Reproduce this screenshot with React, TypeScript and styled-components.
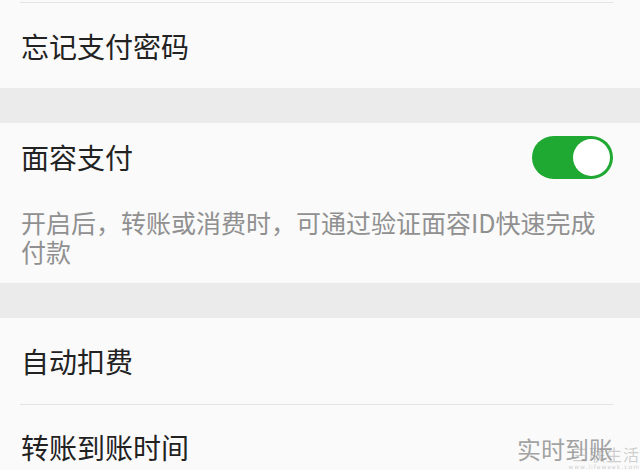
import React from "react";
import styled, { createGlobalStyle } from "styled-components";

const GlobalStyle = createGlobalStyle`
  html, body {
    margin: 0;
    padding: 0;
    background: #fafafa;
  }
  body {
    font-family: "Noto Sans CJK SC", "Noto Sans", sans-serif;
  }
`;

const Page = styled.div`
  position: relative;
  width: 640px;
  height: 470px;
  overflow: hidden;
  background: #fafafa;
  display: flex;
  flex-direction: column;
`;

const Divider = styled.div<{ $top?: number }>`
  height: 1px;
  margin: ${(p) => p.$top ?? 0}px 27px 0 20px;
  background: #e4e4e4;
  flex-shrink: 0;
`;

const Band = styled.div`
  height: 35px;
  background: #ebebeb;
  flex-shrink: 0;
`;

const Row = styled.div<{ $h: number }>`
  height: ${(p) => p.$h}px;
  flex-shrink: 0;
  display: flex;
  align-items: center;
  justify-content: space-between;
  padding: 0 27px 0 21px;
`;

const Title = styled.span`
  font-size: 28px;
  color: #222222;
`;

const Value = styled.span`
  font-size: 24px;
  color: #a3a3a3;
  margin-top: 2px;
`;

const Note = styled.p`
  margin: 0;
  padding: 17px 27px 17px 21px;
  font-size: 25px;
  line-height: 29px;
  color: #909090;
  flex-shrink: 0;
`;

const Switch = styled.div<{ $on: boolean }>`
  position: relative;
  width: 81px;
  height: 43px;
  border-radius: 22px;
  background: ${(p) => (p.$on ? "#1fa832" : "#dcdcdc")};
`;

const Knob = styled.div<{ $on: boolean }>`
  position: absolute;
  top: 3px;
  left: ${(p) => (p.$on ? "41px" : "3px")};
  width: 37px;
  height: 37px;
  border-radius: 50%;
  background: #ffffff;
`;

// faint site watermark stamped over the bottom-right corner
const Watermark = styled.div`
  position: absolute;
  right: 0;
  bottom: 0;
  display: flex;
  flex-direction: column;
  align-items: flex-end;
  gap: 2px;
  color: rgba(150, 150, 150, 0.45);
  line-height: 1;
`;

const MarkName = styled.span`
  font-size: 16px;
  letter-spacing: 1px;
`;

const MarkSite = styled.span`
  font-family: "DejaVu Sans", sans-serif;
  font-size: 6px;
  letter-spacing: 1px;
`;

export default function App() {
  return (
    <>
      <GlobalStyle />
      <Page>
        <Divider $top={2} />
        <Row $h={85}>
          <Title>忘记支付密码</Title>
        </Row>
        <Band />
        <Row $h={68}>
          <Title>面容支付</Title>
          <Switch $on>
            <Knob $on />
          </Switch>
        </Row>
        <Note>开启后，转账或消费时，可通过验证面容ID快速完成付款</Note>
        <Band />
        <Row $h={86}>
          <Title>自动扣费</Title>
        </Row>
        <Divider />
        <Row $h={84}>
          <Title>转账到账时间</Title>
          <Value>实时到账</Value>
        </Row>
        <Watermark>
          <MarkName>三联生活</MarkName>
          <MarkSite>www.lifeweek.com</MarkSite>
        </Watermark>
      </Page>
    </>
  );
}
